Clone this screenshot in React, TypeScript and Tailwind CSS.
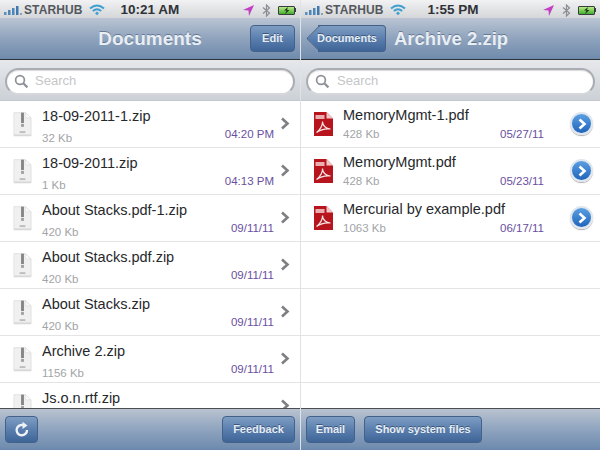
import React from "react";

const btn =
  "flex items-center justify-center rounded-[4px] border border-[#44618a] bg-gradient-to-b from-[#7f9dc2] via-[#5a7fae] to-[#3f6598] text-[#e6edf5] font-bold text-[11px] h-[27px] [text-shadow:0_-1px_0_rgba(30,50,80,0.6)]";

function StatusBar({ time, timeClass }: { time: string; timeClass: string }) {
  return (
    <div className="relative flex h-[18px] shrink-0 items-center bg-gradient-to-b from-[#f2f2f3] to-[#d4d6d9] pt-[2px] text-[#3c3f44] font-bold">
      <svg width="18" height="10" viewBox="0 0 18 10" className="ml-[4px]">
        <rect x="0" y="7" width="2.5" height="3" fill="#5b8fbc" />
        <rect x="4" y="5" width="2.5" height="5" fill="#4d86b8" />
        <rect x="8" y="3" width="2.5" height="7" fill="#4d86b8" />
        <rect x="12" y="1" width="2.5" height="9" fill="#3f79ad" />
        <rect x="16" y="8" width="2" height="2" fill="#8aa2b8" />
      </svg>
      <span className="ml-[2px] text-[12px] tracking-[0.1px] text-[#54585e]">STARHUB</span>
      <svg width="16" height="12" viewBox="0 0 16 12" className="ml-[7px]">
        <path d="M1 4.5 Q8 -1.5 15 4.5" stroke="#3f9fd0" strokeWidth="2" fill="none" />
        <path d="M3.8 7 Q8 3.4 12.2 7" stroke="#3f9fd0" strokeWidth="2" fill="none" />
        <path d="M6 9.2 L8 7.4 L10 9.2 L8 11.2 Z" fill="#3f9fd0" />
      </svg>
      <span className={`text-[13.5px] text-[#2f3237] ${timeClass}`}>{time}</span>
      <div className="ml-auto mr-[4px] flex items-center">
        <svg width="11" height="11" viewBox="0 0 11 11">
          <path d="M11 0 L0 5 L5.5 5.5 L6 11 Z" fill="#c23fc4" />
        </svg>
        <svg width="9" height="13" viewBox="0 0 9 13" className="ml-[8px]">
          <path d="M1 3.5 L7.5 9 L4.5 12 V1 L7.5 4 L1 9.5" stroke="#8b8e93" strokeWidth="1.2" fill="none" />
        </svg>
        <div className="relative ml-[7px] h-[9px] w-[17px] rounded-[1px] border border-[#3a3d40] bg-gradient-to-b from-[#b5ec84] to-[#3eae2c]">
          <svg width="11" height="7" viewBox="0 0 11 7" className="absolute left-[2px] top-0">
            <path d="M7 0 L3 3.4 H5.5 L4 7 L8.5 3 H6 Z" fill="#20301a" />
          </svg>
        </div>
        <div className="h-[4px] w-[1px] bg-[#3a3d40]" />
      </div>
    </div>
  );
}

function SearchBar({ textMl }: { textMl: string }) {
  return (
    <div className="flex h-[41px] shrink-0 items-center border-b border-[#c3c8ce] bg-gradient-to-b from-[#e6e8ec] to-[#ccd1d7] px-[5px] pt-[2px]">
      <div className="flex h-[27px] w-full items-center rounded-full border-2 border-[#a9adb3] border-b-[#d5d7db] bg-white shadow-[inset_0_1px_1px_rgba(0,0,0,0.15)]">
        <svg width="15" height="15" viewBox="0 0 15 15" className="ml-[7px]">
          <circle cx="6" cy="6" r="4.4" stroke="#8e9298" strokeWidth="1.7" fill="none" />
          <path d="M9.3 9.3 L13.4 13.4" stroke="#8e9298" strokeWidth="2.2" />
        </svg>
        <span className={`text-[13px] text-[#c4c6c9] ${textMl}`}>Search</span>
      </div>
    </div>
  );
}

function ZipIcon() {
  return (
    <svg width="19" height="25" viewBox="0 0 20 26" className="shrink-0">
      <path d="M1 0.5 H13 L19 6 V25 H1 Z" fill="#f0f0f0" stroke="#e2e2e2" />
      <path d="M13 0.5 L19 6 H13 Z" fill="#fbfbfb" stroke="#dadada" strokeWidth="0.6" />
      <rect x="8.5" y="0.5" width="3" height="11" fill="#858585" />
      <rect x="8.5" y="12.5" width="3" height="3" fill="#a0a0a0" />
      <rect x="7" y="20" width="6" height="2" fill="#bdbdbd" />
      <rect x="1" y="23.5" width="18" height="1.5" fill="#d6d6d6" />
    </svg>
  );
}

function PdfIcon() {
  return (
    <svg width="19" height="24" viewBox="0 0 19 24" className="shrink-0">
      <path d="M0 0 H12.5 L19 6.5 V24 H0 Z" fill="#b8141d" />
      <path d="M12.5 0 L19 6.5 H12.5 Z" fill="#f1c7c7" />
      <rect x="1.5" y="3" width="9" height="4" fill="#e8aeb0" />
      <path
        d="M2.5 20.5 C6 18 9 13 8.5 9.5 C8.5 13.5 12 17 16.5 17 C12 16.5 6 18 2.5 20.5 Z"
        stroke="#f7e6e6"
        strokeWidth="1.2"
        fill="none"
      />
    </svg>
  );
}

function Row({
  name,
  size,
  date,
  dateClass,
  right,
  icon,
  textClass,
  sizeClass,
}: {
  name?: string;
  size?: string;
  date?: string;
  dateClass?: string;
  right?: React.ReactNode;
  icon?: React.ReactNode;
  textClass?: string;
  sizeClass?: string;
}) {
  return (
    <div className="relative flex h-[47px] shrink-0 items-center border-b border-[#e4e4e6] bg-white">
      {icon && <div className="ml-[12px] flex w-[20px] justify-center">{icon}</div>}
      {name && (
        <div className={`ml-[10px] flex h-full flex-col ${textClass ?? ""}`}>
          <span className="text-[14.5px] leading-[18px] text-[#26282b]">{name}</span>
          {size && <span className={`text-[11.5px] leading-[13px] text-[#a2a4a7] ${sizeClass ?? ""}`}>{size}</span>}
        </div>
      )}
      {date && (
        <span className={`absolute top-[26px] text-[11.5px] leading-[14px] text-[#6a4fa0] ${dateClass}`}>
          {date}
        </span>
      )}
      {right}
    </div>
  );
}

function Chevron() {
  return (
    <svg width="10" height="13" viewBox="0 0 10 13" className="absolute right-[10px] top-[16px]">
      <path d="M2 1.5 L7.5 6.5 L2 11.5" stroke="#7d7f83" strokeWidth="2.6" fill="none" />
    </svg>
  );
}

function Disclosure() {
  return (
    <div className="absolute right-[7px] top-[11px] flex h-[23px] w-[23px] items-center justify-center rounded-full border-2 border-[#dfe6ee] bg-gradient-to-b from-[#5ba0e2] to-[#1f64bb] shadow-[0_1px_1px_rgba(0,0,0,0.3)]">
      <svg width="10" height="12" viewBox="0 0 10 12">
        <path d="M2.5 1.5 L7.5 6 L2.5 10.5" stroke="#fff" strokeWidth="2.6" fill="none" />
      </svg>
    </div>
  );
}

const leftRows = [
  ["18-09-2011-1.zip", "32 Kb", "04:20 PM"],
  ["18-09-2011.zip", "1 Kb", "04:13 PM"],
  ["About Stacks.pdf-1.zip", "420 Kb", "09/11/11"],
  ["About Stacks.pdf.zip", "420 Kb", "09/11/11"],
  ["About Stacks.zip", "420 Kb", "09/11/11"],
  ["Archive 2.zip", "1156 Kb", "09/11/11"],
  ["Js.o.n.rtf.zip", "", ""],
];

const rightRows = [
  ["MemoryMgmt-1.pdf", "428 Kb", "05/27/11"],
  ["MemoryMgmt.pdf", "428 Kb", "05/23/11"],
  ["Mercurial by example.pdf", "1063 Kb", "06/17/11"],
];

const navBg = "bg-gradient-to-b from-[#bac5d3] via-[#8fa3bd] to-[#6f8bac] border-b border-[#2e3338]";
const barBg = "bg-gradient-to-b from-[#b9c3d0] via-[#8fa4bf] to-[#6c89ad] border-t border-[#4a4d52]";
const titleCls = "mt-[1px] font-bold text-[#e9eef4] [text-shadow:0_-1px_0_rgba(50,70,100,0.5)]";

export default function App() {
  return (
    <div
      className="flex h-[450px] w-[600px] bg-white"
      style={{ fontFamily: '"Liberation Sans", Arial, sans-serif' }}
    >
      <div className="flex h-full w-[300px] flex-col overflow-hidden">
        <StatusBar time="10:21 AM" timeClass="ml-[15px]" />
        <div className={`relative flex h-[42px] shrink-0 items-center justify-center ${navBg}`}>
          <span className={`text-[19px] ${titleCls}`}>Documents</span>
          <div className={`${btn} absolute right-[5px] top-[7px] w-[45px]`}>Edit</div>
        </div>
        <SearchBar textMl="ml-[6px]" />
        <div className="flex min-h-0 flex-1 flex-col overflow-hidden">
          {leftRows.map((r) => (
            <Row
              key={r[0]}
              name={r[0]}
              size={r[1]}
              date={r[2]}
              dateClass="right-[26px]"
              icon={<ZipIcon />}
              right={<Chevron />}
              textClass="pt-[6px]"
              sizeClass="mt-[7px]"
            />
          ))}
        </div>
        <div className={`flex h-[42px] shrink-0 items-center justify-between px-[5px] ${barBg}`}>
          <div className={`${btn} w-[33px]`}>
            <svg width="18" height="18" viewBox="0 0 18 18">
              <path d="M14 9 A5.2 5.2 0 1 1 10.5 4.2" stroke="#eef2f7" strokeWidth="2.4" fill="none" />
              <path d="M9.5 0.8 L14.5 4.6 L9.5 8 Z" fill="#eef2f7" />
            </svg>
          </div>
          <div className={`${btn} w-[73px]`}>Feedback</div>
        </div>
      </div>
      <div className="w-[1px] bg-[#dfe2e6]" />
      <div className="flex h-full w-[299px] flex-col overflow-hidden">
        <StatusBar time="1:55 PM" timeClass="ml-[21px]" />
        <div className={`relative flex h-[42px] shrink-0 items-center ${navBg}`}>
          <div className={`${btn} relative ml-[17px] w-[68px] rounded-l-none border-l-0 pr-[9px]`}>
            <div className="absolute left-[-8px] top-[3px] h-[19px] w-[19px] rotate-45 rounded-[2px] border-b border-l border-[#44618a] bg-gradient-to-br from-[#7f9dc2] via-[#5a7fae] to-[#3f6598]" />
            <span className="relative">Documents</span>
          </div>
          <span className={`ml-[8px] text-[18.5px] ${titleCls}`}>Archive 2.zip</span>
        </div>
        <SearchBar textMl="ml-[7px]" />
        <div className="flex min-h-0 flex-1 flex-col overflow-hidden">
          {rightRows.map((r) => (
            <Row
              key={r[0]}
              name={r[0]}
              size={r[1]}
              date={r[2]}
              dateClass="right-[56px]"
              icon={<PdfIcon />}
              right={<Disclosure />}
              textClass="pt-[5px]"
              sizeClass="mt-[4px]"
            />
          ))}
          <Row />
          <Row />
          <Row />
        </div>
        <div className={`flex h-[42px] shrink-0 items-center gap-[9px] px-[5px] ${barBg}`}>
          <div className={`${btn} w-[49px]`}>Email</div>
          <div className={`${btn} w-[118px] text-[11.5px]`}>Show system files</div>
        </div>
      </div>
    </div>
  );
}
